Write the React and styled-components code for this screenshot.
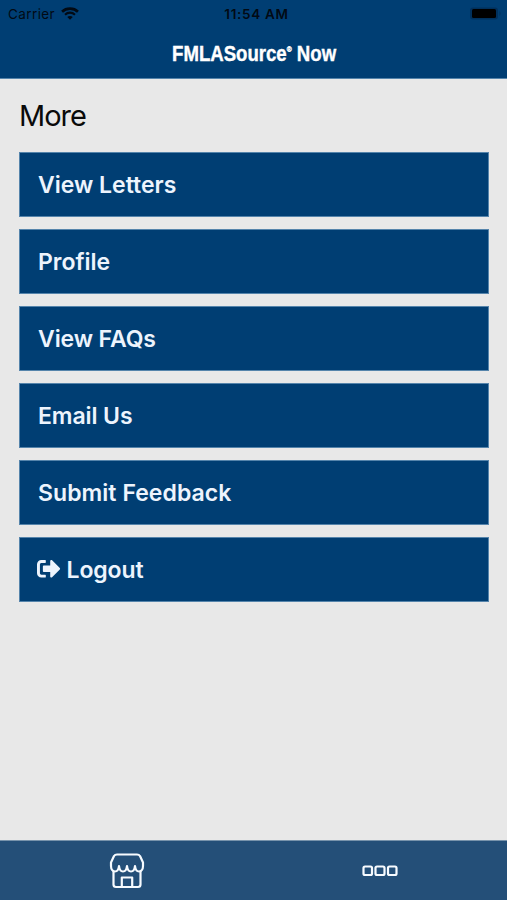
import styled, { createGlobalStyle } from 'styled-components'
import { FaSignOutAlt } from 'react-icons/fa'

const GlobalStyle = createGlobalStyle`
  * {
    box-sizing: border-box;
  }

  body {
    margin: 0;
    background: #e8e8e8;
    font-family: Inter, 'Liberation Sans', sans-serif;
  }
`

const Screen = styled.div`
  display: flex;
  flex-direction: column;
  width: 507px;
  height: 900px;
  overflow: hidden;
`

const Header = styled.header`
  height: 79px;
  background: #003e73;
  border-bottom: 1px solid #5584ab;
`

const StatusBar = styled.div`
  display: grid;
  grid-template-columns: 1fr auto 1fr;
  align-items: center;
  height: 27px;
  padding: 0 5px 0 8px;
  color: #020a14;
  font-size: 13.5px;
`

const Carrier = styled.div`
  display: flex;
  align-items: center;
  gap: 6px;
  letter-spacing: 0.4px;
`

const Time = styled.span`
  padding-left: 3px;
  font-weight: 600;
  letter-spacing: 0.7px;
`

const BatteryIcon = styled.svg`
  justify-self: end;
`

const Brand = styled.h1`
  display: flex;
  justify-content: center;
  margin: 0;
  color: #fff;
  font: bold 22px/54px 'Liberation Sans Narrow', 'Liberation Sans', sans-serif;
  white-space: nowrap;
  -webkit-text-stroke: 0.4px #fff;

  span {
    transform: translateX(1px) scaleX(${(props) => props.$stretch});
  }

  sup {
    font-size: 8px;
    line-height: 0;
    vertical-align: 9px;
  }
`

const Content = styled.main`
  flex: 1;
  padding: 19px 18px 0 19px;
`

const Heading = styled.h2`
  margin: 0 0 18px;
  color: #0a0a0a;
  font-size: 29px;
  font-weight: 400;
  line-height: 36px;
  letter-spacing: -1px;
`

const Menu = styled.nav`
  display: flex;
  flex-direction: column;
  gap: 12px;
`

const MenuButton = styled.button`
  display: flex;
  align-items: center;
  gap: 6px;
  height: 65px;
  padding: 0 18px;
  border: 1px solid #5584ab;
  background: #003e73;
  color: #edf4fd;
  font: 600 23px Inter, 'Liberation Sans', sans-serif;
  letter-spacing: ${(props) => props.$spacing || 0}px;
  text-align: left;

  svg {
    margin: -1px 0 0 -1px;
  }
`

const TabBar = styled.footer`
  display: grid;
  grid-template-columns: 1fr 1fr;
  height: 60px;
  border-top: 1px solid #7893ab;
  background: #244f78;
`

const Tab = styled.a`
  display: flex;
  align-items: center;
  justify-content: center;
`

const items = [
  { label: 'View Letters' },
  { label: 'Profile' },
  { label: 'View FAQs', spacing: -0.1 },
  { label: 'Email Us', spacing: -0.1 },
  { label: 'Submit Feedback', spacing: 0.05 },
  { label: 'Logout', spacing: -0.1, icon: <FaSignOutAlt size={23.5} /> },
]

const WifiIcon = () => (
  <svg width="18" height="13" viewBox="0 0 17 12" fill="none">
    <path d="M1 4.3C5 .4 12 .4 16 4.3" stroke="currentColor" strokeWidth="2.5" />
    <path d="M3.8 7.1C6.5 4.6 10.5 4.6 13.2 7.1" stroke="currentColor" strokeWidth="2" />
    <path d="M8.5 11.8 5.9 9.3C7.3 8 9.7 8 11.1 9.3Z" fill="currentColor" />
  </svg>
)

const StoreIcon = () => (
  <svg width="36" height="36" viewBox="0 0 36 36" fill="none" stroke="#f7fbff" strokeWidth="2.2" strokeLinejoin="round">
    <path d="M8 1.5H28Q30 1.5 31 3L34 9.5V13C34 16.500 32 18.5 30 18.5C28 18.5 26.400 16.500 26 13C25.600 16.500 24 18.5 22 18.5C20 18.5 18.400 16.500 18 13C17.600 16.500 16 18.5 14 18.5C12 18.5 10.400 16.500 10 13C9.600 16.500 8 18.5 6 18.5C4 18.5 2 16.500 2 13V9.5L5 3Q6 1.5 8 1.5Z" />
    <path d="M4.5 18V31.5Q4.5 34 7 34H29Q31.5 34 31.5 31.5V18M12.8 34V24.5H23.2V34" />
  </svg>
)

const MoreIcon = () => (
  <svg width="36" height="12" viewBox="0 0 36 12" fill="none" stroke="#f7fbff" strokeWidth="2.2">
    <rect x="1.5" y="1.5" width="8.5" height="8.5" rx="1.5" />
    <rect x="13.5" y="1.5" width="9" height="8.5" rx="1.5" />
    <rect x="26" y="1.5" width="8.5" height="8.5" rx="1.5" />
  </svg>
)

const App = () => {
  return (
    <Screen>
      <GlobalStyle />
      <Header>
        <StatusBar>
          <Carrier>
            Carrier
            <WifiIcon />
          </Carrier>
          <Time>11:54 AM</Time>
          <BatteryIcon width="33" height="13" viewBox="0 0 33 13">
            <rect x="1" y="0.5" width="28" height="12" rx="3" fill="#00305c" />
            <path d="M30.5 4Q32.5 6.5 30.5 9Z" fill="#00305c" />
            <rect x="3" y="2" width="24" height="9" rx="1.5" fill="#000" />
          </BatteryIcon>
        </StatusBar>
        <Brand $stretch={0.845}>
          <span>
            FMLASource<sup>®</sup> Now
          </span>
        </Brand>
      </Header>
      <Content>
        <Heading>More</Heading>
        <Menu>
          {items.map((item) => (
            <MenuButton key={item.label} $spacing={item.spacing}>
              {item.icon}
              {item.label}
            </MenuButton>
          ))}
        </Menu>
      </Content>
      <TabBar>
        <Tab>
          <StoreIcon />
        </Tab>
        <Tab>
          <MoreIcon />
        </Tab>
      </TabBar>
    </Screen>
  )
}

export default App
